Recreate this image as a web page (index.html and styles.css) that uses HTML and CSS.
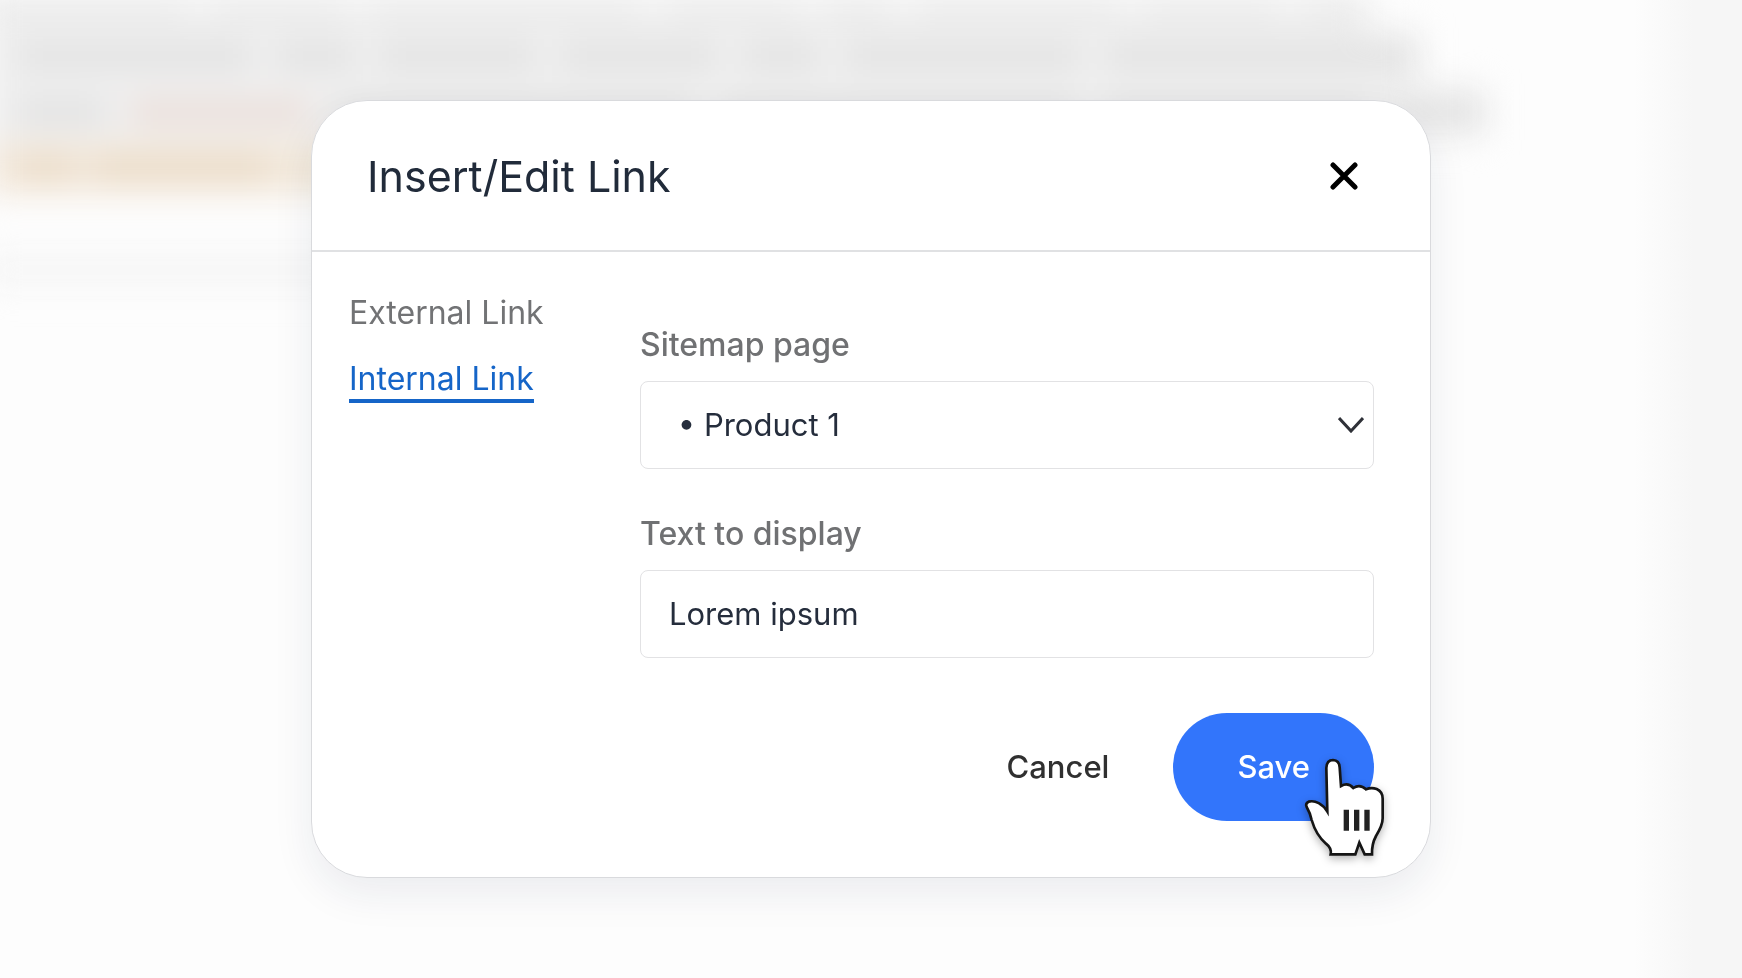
FILE: index.html
```html
<!DOCTYPE html>
<html lang="en">
<head>
	<meta charset="utf-8">
	<meta name="viewport" content="width=device-width, initial-scale=1">
	<title>Insert/Edit Link</title>
	<link rel="stylesheet" href="styles.css">
</head>
<body>
<div class="page" aria-hidden="true">
	<div class="editor">
		<div class="line line_first">
			<i class="w3"></i><i class="w2"></i><i class="w4"></i><i class="w2"></i><i class="w1"></i><i class="w3"></i><i class="w2"></i><i class="w1"></i>
		</div>
		<div class="line line_second">
			<i class="w3"></i><i class="w1"></i><i class="w2"></i><i class="w2"></i><i class="w1"></i><i class="w3"></i><i class="w4"></i>
		</div>
		<div class="line line_third">
			<i class="w1"></i><i class="w2 pink"></i><i class="w4"></i><i class="w4"></i><i class="w3"></i><i class="w1"></i>
		</div>
		<div class="line line_marked">
			<i class="w1"></i><i class="w3"></i><i class="w1 light"></i>
		</div>
		<div class="line line_faint"></div>
	</div>
	<div class="sidebar"></div>
</div>

<div class="overlay">
	<div class="dialog" role="dialog" aria-labelledby="dialogTitle">
		<div class="dialog_header">
			<h1 id="dialogTitle">Insert/Edit Link</h1>
			<button type="button" class="close" aria-label="Close">
				<svg viewBox="0 0 28 28" width="28" height="28">
					<path d="M3 3L25 25M25 3L3 25"/>
				</svg>
			</button>
		</div>
		<div class="dialog_body">
			<nav class="link_type">
				<a href="#external">External Link</a>
				<a href="#internal" class="active">Internal Link</a>
			</nav>
			<form class="link_form">
				<div class="field">
					<label for="sitemapPage">Sitemap page</label>
					<div class="select_box">
						<select id="sitemapPage">
							<option>&nbsp;• Product 1</option>
						</select>
						<svg class="chevron" viewBox="0 0 26 16" width="26" height="16">
							<path d="M1 1L13 14L25 1"/>
						</svg>
					</div>
				</div>
				<div class="field">
					<label for="displayText">Text to display</label>
					<input type="text" id="displayText" value="Lorem ipsum">
				</div>
				<div class="actions">
					<button type="button" class="btn cancel">Cancel</button>
					<div class="save_box">
						<button type="button" class="btn save">Save</button>
						<svg class="pointer" viewBox="0 0 330 390" width="110" height="130">
							<path class="hand" d="M112 215L109 84Q110 60 129 60Q148 61 149 82L153 138Q174 126 190 144Q210 131 228 148Q244 141 260 147Q278 155 278 176V235C278 255 268 272 258 288Q245 312 246 343H224L208 308L196 343H122Q126 325 108 311Q78 285 65 240Q60 218 50 201Q45 190 56 185C76 180 98 192 112 215Z"/>
							<path class="bars" d="M169 209V272M200 209V272M231 209V272"/>
						</svg>
					</div>
				</div>
			</form>
		</div>
	</div>
</div>
</body>
</html>
```

FILE: styles.css
```css
*{
	padding: 0px;
	margin: 0px;
	box-sizing: border-box;
}
body{
	font-family: Inter, sans-serif;
	background-color: #fdfdfd;
	overflow: hidden;
}
/* blurred editor behind the dialog */
.page{
	display: flex;
	height: 100vh;
	overflow: hidden;
}
.editor{
	flex: 1;
	margin-left: -16px;
	filter: blur(16px);
}
.line{
	display: flex;
	align-items: center;
	gap: 24px;
	height: 56px;
	background-color: #f0f0f0;
}
.line i{
	height: 28px;
	background-color: #e2e2e2;
}
.w1{
	flex: 1;
}
.w2{
	flex: 2;
}
.w3{
	flex: 3;
}
.w4{
	flex: 4;
}
.line_first{
	width: 84%;
	height: 28px;
	align-items: flex-start;
}
.line_first i{
	height: 14px;
}
.line_second{
	width: 87%;
	padding-left: 32px;
}
.line_third{
	width: 91%;
	padding-left: 32px;
}
.line .pink{
	background-color: #ebdfda;
}
.line_marked{
	width: 22%;
	gap: 16px;
	padding-left: 32px;
	background-color: #f4ebe0;
}
.line_marked i{
	height: 28px;
	background-color: #ebdcc8;
}
.line_marked .light{
	background-color: #f1e7d6;
}
.line_faint{
	width: 22%;
	height: 36px;
	margin-top: 56px;
	background-color: #f6f6f6;
}
.sidebar{
	width: 108px;
	background: linear-gradient(90deg, #fdfdfd, #f6f6f6 60px);
}
.overlay{
	position: fixed;
	inset: 0;
	display: flex;
	justify-content: center;
	align-items: center;
}
.dialog{
	width: 1120px;
	max-width: 100%;
	background-color: white;
	border: 1px solid #d9dadd;
	border-radius: 56px;
	box-shadow: 0 16px 40px rgba(30, 40, 80, 0.08);
}
.dialog_header{
	display: flex;
	justify-content: space-between;
	align-items: center;
	padding: 45px 72px 44px 55px;
	border-bottom: 2px solid #e0e1e3;
}
.dialog_header h1{
	font-size: 43px;
	line-height: 60px;
	font-weight: 400;
	color: #212b3a;
}
button{
	font-family: inherit;
	border: none;
	background: none;
	cursor: pointer;
}
.close{
	display: flex;
}
.close svg{
	fill: none;
	stroke: black;
	stroke-width: 5;
	stroke-linecap: round;
}
.dialog_body{
	display: grid;
	grid-template-columns: 291px 1fr;
	padding: 41px 56px 56px 37px;
}
.link_type{
	display: flex;
	flex-direction: column;
	align-items: flex-start;
	gap: 26px;
}
.link_type a{
	font-size: 32px;
	line-height: 40px;
	color: #727375;
	text-decoration: none;
}
.link_type .active{
	color: #1565c8;
	border-bottom: 4px solid #1565c8;
}
.link_form{
	display: flex;
	flex-direction: column;
	gap: 45px;
	padding-top: 32px;
}
.field{
	display: flex;
	flex-direction: column;
	gap: 16px;
}
label{
	font-size: 32px;
	line-height: 40px;
	font-weight: 500;
	color: #707173;
}
input, select{
	width: 100%;
	height: 88px;
	padding: 0 28px 2px;
	font-family: inherit;
	font-size: 31px;
	color: #252d3c;
	background-color: white;
	border: 1px solid #e2e2e4;
	border-radius: 8px;
	appearance: none;
}
.select_box{
	display: grid;
	align-items: center;
}
.select_box select, .chevron{
	grid-area: 1 / 1;
}
.chevron{
	justify-self: end;
	margin-right: 10px;
	fill: none;
	stroke: #2f3138;
	stroke-width: 3;
	pointer-events: none;
}
.actions{
	display: flex;
	justify-content: flex-end;
	align-items: center;
	gap: 64px;
	padding-top: 10px;
}
.btn{
	font-size: 31px;
	line-height: 40px;
	font-weight: 500;
	color: #303030;
}
.save_box{
	position: relative;
}
.save{
	display: block;
	padding: 34px 64px;
	color: white;
	background-color: #3275fb;
	border-radius: 56px;
}
/* mouse pointer over the save button */
.pointer{
	position: absolute;
	left: 117px;
	top: 27px;
	pointer-events: none;
	filter: drop-shadow(0 3px 4px rgba(0, 0, 0, 0.3));
}
.hand{
	fill: white;
	stroke: #151515;
	stroke-width: 8;
}
.bars{
	fill: none;
	stroke: #222222;
	stroke-width: 16;
}
```
